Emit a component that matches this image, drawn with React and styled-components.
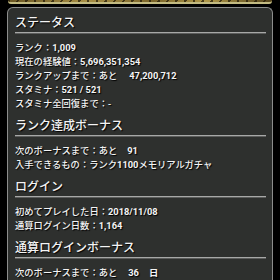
import styled, { createGlobalStyle } from "styled-components"

const GlobalStyle = createGlobalStyle`
  html, body {
    margin: 0;
    padding: 0;
    background: #000;
    overflow: hidden;
  }
`

const Screen = styled.div`
  width: 280px;
  height: 280px;
  overflow: hidden;
  background: #000;
  display: flex;
  flex-direction: column;
  font-family: "Roboto", "Noto Sans CJK JP", sans-serif;
  color: #f4f4f4;
`

const Banner = styled.div`
  margin: 0 8px;
  height: 5px;
  border-bottom: 2px solid #c2ba82;
  border-radius: 0 0 3px 3px;
  background:
    repeating-linear-gradient(
      115deg,
      rgba(30, 22, 6, 0.7) 0px,
      rgba(30, 22, 6, 0.7) 2px,
      transparent 2px,
      transparent 8px
    ),
    linear-gradient(90deg, #6a5622, #a88f45 30%, #7a6429 55%, #b09848 75%, #54431a);
`

const Panel = styled.div`
  margin: 3px 7px 0;
  flex: 1;
  background: #2e302e;
  border: 1px solid #8d8e8d;
  border-bottom: none;
  border-radius: 6px 6px 0 0;
  padding: 7px 6px 0 7px;
  display: flex;
  flex-direction: column;
  gap: 7px;
`

const Section = styled.section`
  display: flex;
  flex-direction: column;
`

const Title = styled.h2`
  margin: 0;
  font-size: 12px;
  line-height: 16px;
  font-weight: 500;
  text-shadow: 1px 1px 1px #000;
  white-space: nowrap;
`

const Divider = styled.div`
  margin-top: 1px;
  height: 0;
  border-top: 1px solid #a7a8a7;
  border-bottom: 1px solid #5c5d5c;
`

const Lines = styled.div`
  margin-top: 7px;
  display: flex;
  flex-direction: column;
`

const Line = styled.div`
  font-size: 9.3px;
  line-height: 14px;
  font-weight: 500;
  white-space: nowrap;
  text-shadow: 1px 1px 1px #000;
`

const Num = styled.span`
  font-weight: 700;
  margin-left: ${({ $gap }) => $gap || 0}px;
`

const sections = [
  {
    title: "ステータス",
    lines: [
      <>ランク：<Num>1,009</Num></>,
      <>現在の経験値：<Num>5,696,351,354</Num></>,
      <>ランクアップまで：あと<Num $gap={12}>47,200,712</Num></>,
      <>スタミナ：<Num>521 / 521</Num></>,
      <>スタミナ全回復まで：-</>,
    ],
  },
  {
    title: "ランク達成ボーナス",
    lines: [
      <>次のボーナスまで：あと<Num $gap={10}>91</Num></>,
      <>入手できるもの：ランク<Num>1100</Num>メモリアルガチャ</>,
    ],
  },
  {
    title: "ログイン",
    lines: [
      <>初めてプレイした日：<Num>2018/11/08</Num></>,
      <>通算ログイン日数：<Num>1,164</Num></>,
    ],
  },
  {
    title: "通算ログインボーナス",
    lines: [
      <>次のボーナスまで：あと<Num $gap={11}>36</Num><Num $gap={10}>日</Num></>,
    ],
  },
]

const App = () => {
  return (
    <Screen>
      <GlobalStyle />
      <Banner />
      <Panel>
        {sections.map((s) => (
          <Section key={s.title}>
            <Title>{s.title}</Title>
            <Divider />
            <Lines>
              {s.lines.map((l, i) => (
                <Line key={i}>{l}</Line>
              ))}
            </Lines>
          </Section>
        ))}
      </Panel>
    </Screen>
  )
}

export default App
